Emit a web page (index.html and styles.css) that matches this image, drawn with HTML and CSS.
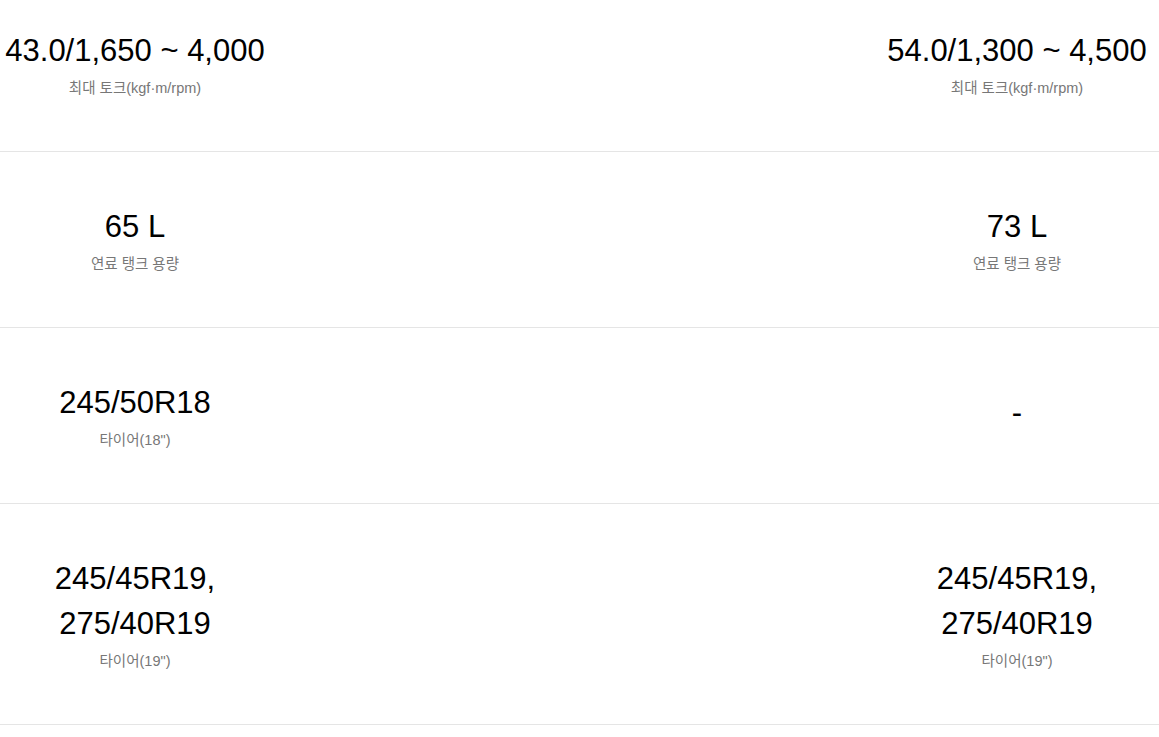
FILE: index.html
```html
<!DOCTYPE html>
<html lang="ko">
<head>
<meta charset="utf-8">
<link rel="stylesheet" href="styles.css">
</head>
<body>
<div class="spec">
  <div class="row first">
    <div class="cell"><p class="val">43.0/1,650 ~ 4,000</p><p class="lbl">최대 토크(kgf·m/rpm)</p></div>
    <div class="cell"><p class="val">54.0/1,300 ~ 4,500</p><p class="lbl">최대 토크(kgf·m/rpm)</p></div>
  </div>
  <div class="row">
    <div class="cell"><p class="val">65 L</p><p class="lbl">연료 탱크 용량</p></div>
    <div class="cell"><p class="val">73 L</p><p class="lbl">연료 탱크 용량</p></div>
  </div>
  <div class="row">
    <div class="cell"><p class="val">245/50R18</p><p class="lbl">타이어(18")</p></div>
    <div class="cell"><p class="val solo">-</p></div>
  </div>
  <div class="row">
    <div class="cell"><p class="val">245/45R19,<br>275/40R19</p><p class="lbl">타이어(19")</p></div>
    <div class="cell"><p class="val">245/45R19,<br>275/40R19</p><p class="lbl">타이어(19")</p></div>
  </div>
</div>
</body>
</html>
```
FILE: styles.css
```css
html, body {
  margin: 0;
  padding: 0;
  background: #fff;
}
body {
  font-family: "Liberation Sans", "Noto Sans CJK KR", Arial, sans-serif;
  color: #000;
}
.spec {
  display: flex;
  flex-direction: column;
}
.row {
  display: flex;
  justify-content: space-between;
  padding: 52px 7px 53px 0;
  border-bottom: 1px solid #e5e5e5;
}
.row.first {
  padding-top: 28px;
}
.cell {
  width: 270px;
  display: flex;
  flex-direction: column;
  align-items: center;
  justify-content: center;
  text-align: center;
}
.val {
  margin: 0;
  font-size: 31px;
  line-height: 45px;
}
.val.solo {
  margin-bottom: 6px;
}
.lbl {
  margin: 5px 0 0;
  font-size: 14.5px;
  line-height: 20px;
  color: #777;
}
```
